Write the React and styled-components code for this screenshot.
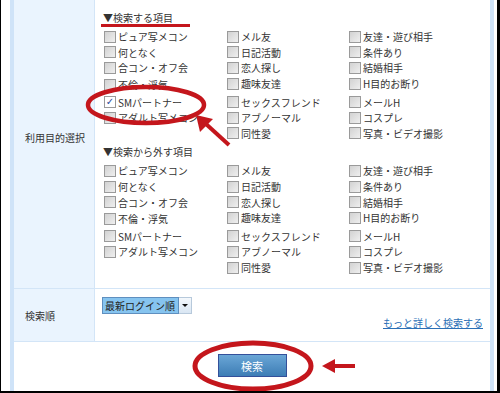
import React from "react";
import styled, { createGlobalStyle } from "styled-components";

const GlobalStyle = createGlobalStyle`
  html, body {
    margin: 0;
    padding: 0;
    background: #ffffff;
  }
  body {
    font-family: "Noto Sans CJK JP", "Noto Sans", sans-serif;
    color: #333333;
  }
`;

const Frame = styled.div`
  position: relative;
  width: 500px;
  height: 393px;
  box-sizing: border-box;
  border-left: 1px solid #000;
  border-right: 3px solid #000;
  border-bottom: 2px solid #000;
  padding: 0 3px 0 9px;
  overflow: hidden;
`;

const Table = styled.div`
  height: 100%;
  box-sizing: border-box;
  border-left: 4px solid #cfe3f8;
  border-right: 4px solid #cfe3f8;
  display: flex;
  flex-direction: column;
`;

const Row = styled.div`
  display: flex;
  height: ${(p) => p.h}px;
  flex: ${(p) => (p.h ? "none" : "1")};
  border-bottom: 1px solid #d3e5f7;
`;

const Label = styled.div`
  width: 81px;
  flex: none;
  background: #eaf4fe;
  border-right: 1px solid #d3e5f7;
  display: flex;
  align-items: center;
  padding: 0 0 ${(p) => p.pb || 0}px 11px;
  box-sizing: border-box;
  font-size: 10px;
  color: #333;
`;

const Cell = styled.div`
  flex: 1;
  box-sizing: border-box;
  padding: ${(p) => p.pad};
  display: flex;
  flex-direction: column;
`;

const Heading = styled.div`
  font-size: 10px;
  line-height: 16px;
  height: 16px;
  padding-left: 8px;
  margin-bottom: 3px;
  color: #333;
`;

const Group = styled.div`
  display: grid;
  grid-template-columns: 123px 122px 1fr;
  grid-auto-rows: 15.6px;
  padding-left: 9px;
  margin-bottom: ${(p) => p.mb}px;
`;

const Item = styled.label`
  display: flex;
  align-items: center;
  font-size: 10px;
  white-space: nowrap;
  color: #333;
  padding-top: ${(p) => (p.low ? 2 : 0)}px;
`;

const Box = styled.span`
  width: 10px;
  height: 10px;
  flex: none;
  margin-right: 2px;
  border: 1px solid #9a9a9a;
  background: ${(p) =>
    p.checked ? "#ffffff" : "linear-gradient(135deg, #d2d2d2, #efefef)"};
  display: flex;
  align-items: center;
  justify-content: center;
  font-size: 10px;
  line-height: 1;
  color: #2a4a9a;
  font-family: "DejaVu Sans", sans-serif;
`;

const SelectWrap = styled.div`
  display: flex;
  height: 17px;
`;

const SelectValue = styled.div`
  width: 77px;
  box-sizing: border-box;
  background: #86c4ef;
  border: 1px solid #5f8fbf;
  font-size: 10px;
  line-height: 15px;
  padding-left: 2px;
  color: #222;
`;

const SelectArrow = styled.div`
  width: 13px;
  box-sizing: border-box;
  background: linear-gradient(#f4f8fc, #d9e6f3);
  border: 1px solid #b7c9db;
  border-left: none;
  display: flex;
  align-items: center;
  justify-content: center;
  &::after {
    content: "";
    border-left: 3px solid transparent;
    border-right: 3px solid transparent;
    border-top: 3px solid #111;
  }
`;

const MoreLink = styled.a`
  align-self: flex-end;
  margin-top: 2px;
  font-size: 10px;
  line-height: 14px;
  color: #2a6fb6;
  text-decoration: underline;
`;

const ButtonRow = styled.div`
  flex: 1;
  display: flex;
  justify-content: center;
  padding-top: 12px;
`;

const SearchButton = styled.button`
  width: 69px;
  height: 23px;
  border: 1px solid #34509a;
  background: linear-gradient(#6aa6d6, #3d7db5);
  color: #ffffff;
  font-family: "Noto Sans CJK JP", sans-serif;
  font-size: 11px;
  padding: 0;
`;

const Overlay = styled.svg`
  position: absolute;
  left: 0;
  top: 0;
  pointer-events: none;
`;

const RED = "#c4161c";

const groups = [
  [
    ["ピュア写メコン", "メル友", "友達・遊び相手"],
    ["何となく", "日記活動", "条件あり"],
    ["合コン・オフ会", "恋人探し", "結婚相手"],
    ["不倫・浮気", "趣味友達", "H目的お断り"],
  ],
  [
    ["SMパートナー", "セックスフレンド", "メールH"],
    ["アダルト写メコン", "アブノーマル", "コスプレ"],
    [null, "同性愛", "写真・ビデオ撮影"],
  ],
];

const Section = ({ title, checked }) => (
  <>
    <Heading>{title}</Heading>
    {groups.map((rows, gi) => (
      <Group key={gi} mb={gi === 0 ? 3 : 0}>
        {rows.flatMap((row, ri) =>
          row.map((t, ci) =>
            t ? (
              <Item key={`${ri}-${ci}`} low={t === "不倫・浮気"}>
                <Box checked={checked && t === "SMパートナー"}>
                  {checked && t === "SMパートナー" ? "✓" : ""}
                </Box>
                {t}
              </Item>
            ) : (
              <span key={`${ri}-${ci}`} />
            )
          )
        )}
      </Group>
    ))}
  </>
);

const Annotations = () => (
  <Overlay width="500" height="393" viewBox="0 0 500 393">
    <rect x="100" y="24" width="89" height="3" fill={RED} />
    <ellipse cx="145" cy="105" rx="58" ry="18" fill="none" stroke={RED} strokeWidth="4.5" />
    <line x1="228" y1="145" x2="205" y2="124" stroke={RED} strokeWidth="4" />
    <polygon points="195,115 212,119 199,132" fill={RED} />
    <ellipse cx="252" cy="366" rx="58" ry="23" fill="none" stroke={RED} strokeWidth="5" />
    <rect x="332" y="364" width="22" height="4" fill={RED} />
    <polygon points="321,366 334,359 334,373" fill={RED} />
  </Overlay>
);

const App = () => {
  return (
    <>
      <GlobalStyle />
      <Frame>
        <Table>
          <Row h={288}>
            <Label pb={14}>利用目的選択</Label>
            <Cell pad="10px 0 0 0">
              <Section title="▼検索する項目" checked />
              <Heading style={{ marginTop: 3 }}>▼検索から外す項目</Heading>
              {groups.map((rows, gi) => (
                <Group key={gi} mb={gi === 0 ? 3 : 0}>
                  {rows.flatMap((row, ri) =>
                    row.map((t, ci) =>
                      t ? (
                        <Item key={`${ri}-${ci}`} low={t === "不倫・浮気"}>
                          <Box />
                          {t}
                        </Item>
                      ) : (
                        <span key={`${ri}-${ci}`} />
                      )
                    )
                  )}
                </Group>
              ))}
            </Cell>
          </Row>
          <Row h={52}>
            <Label>検索順</Label>
            <Cell pad="8px 7px 0 7px">
              <SelectWrap>
                <SelectValue>最新ログイン順</SelectValue>
                <SelectArrow />
              </SelectWrap>
              <MoreLink href="#">もっと詳しく検索する</MoreLink>
            </Cell>
          </Row>
          <ButtonRow>
            <SearchButton>検索</SearchButton>
          </ButtonRow>
        </Table>
        <Annotations />
      </Frame>
    </>
  );
};

export default App;
